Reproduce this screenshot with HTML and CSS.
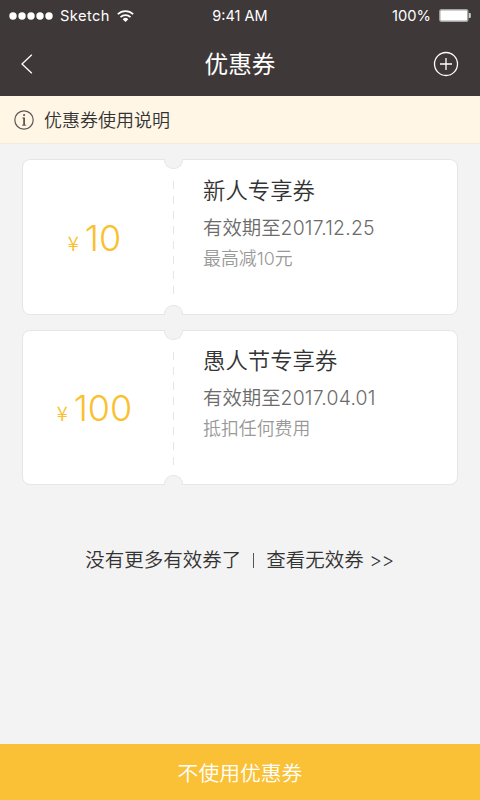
FILE: index.html
```
<!DOCTYPE html>
<html lang="zh-CN">
<head>
<meta charset="UTF-8">
<meta name="viewport" content="width=device-width, initial-scale=1.0">
<title>优惠券</title>
<link rel="stylesheet" href="styles.css">
</head>
<body>
<header class="header">
    <div class="status-bar">
        <div class="status-left">
            <svg class="signal" width="44" height="8" viewBox="0 0 44 8" fill="#fff">
                <circle cx="4" cy="4" r="3.7"/>
                <circle cx="13" cy="4" r="3.7"/>
                <circle cx="22" cy="4" r="3.7"/>
                <circle cx="31" cy="4" r="3.7"/>
                <circle cx="40" cy="4" r="3.7"/>
            </svg>
            <span class="carrier">Sketch</span>
            <svg class="wifi" width="17" height="12" viewBox="0 0 17 12" fill="none" stroke="#fff" stroke-width="1.7">
                <path d="M0.8 4.2a11 11 0 0 1 15.4 0"/>
                <path d="M3.5 7.1a7.2 7.2 0 0 1 10 0"/>
                <path d="M8.5 12l-2.8-2.8a4 4 0 0 1 5.6 0z" fill="#fff" stroke="none"/>
            </svg>
        </div>
        <span class="time">9:41 AM</span>
        <div class="status-right">
            <span class="percent">100%</span>
            <svg class="battery" width="32" height="13" viewBox="0 0 32 13">
                <rect x="0.8" y="0.8" width="28" height="11.4" rx="1.5" fill="#fff" stroke="#a5a2a3" stroke-width="1.4"/>
                <path d="M29.8 4h1a1 1 0 0 1 1 1v3a1 1 0 0 1-1 1h-1z" fill="#d0cecf"/>
            </svg>
        </div>
    </div>
    <div class="nav">
        <svg width="12" height="20" viewBox="0 0 12 20" fill="none" stroke="#fff" stroke-width="1.3">
            <path d="M10.8 0.7L1 10l9.8 9.3"/>
        </svg>
        <h1>优惠券</h1>
        <svg width="26" height="26" viewBox="0 0 26 26" fill="none" stroke="#fff" stroke-width="1.3">
            <circle cx="13" cy="13" r="11.5"/>
            <path d="M7 13h12M13 7v12"/>
        </svg>
    </div>
</header>

<div class="notice">
    <svg width="20" height="20" viewBox="0 0 20 20" fill="none" stroke="#5c5854" stroke-width="1.2">
        <circle cx="10" cy="10" r="9.2"/>
        <path d="M8.3 8h1.7M8 15.2h4.2" stroke-width="0.9"/>
        <path d="M10.1 7.6v7.6" stroke-width="1.8"/>
        <circle cx="10.1" cy="5" r="1.1" fill="#5c5854" stroke="none"/>
    </svg>
    <span>优惠券使用说明</span>
</div>

<main class="coupons">
    <section class="coupon">
        <div class="amount"><span class="yen">¥</span><span class="num">10</span></div>
        <svg class="dashes" width="1" height="113" viewBox="0 0 1 113"><path d="M0.5 0v113" stroke="#e5e5e5" stroke-dasharray="8 7"/></svg>
        <div class="info">
            <h2>新人专享券</h2>
            <p class="date">有效期至<span>2017.12.25</span></p>
            <p class="desc">最高减10元</p>
        </div>
    </section>
    <section class="coupon">
        <div class="amount"><span class="yen">¥</span><span class="num">100</span></div>
        <svg class="dashes" width="1" height="113" viewBox="0 0 1 113"><path d="M0.5 0v113" stroke="#e5e5e5" stroke-dasharray="8 7"/></svg>
        <div class="info">
            <h2>愚人节专享券</h2>
            <p class="date">有效期至<span>2017.04.01</span></p>
            <p class="desc">抵扣任何费用</p>
        </div>
    </section>
</main>

<div class="more">
    <span>没有更多有效券了</span>
    <i class="divider"></i>
    <a>查看无效券 <span class="arrows">&gt;&gt;</span></a>
</div>

<button class="skip">不使用优惠券</button>
</body>
</html>
```

FILE: styles.css
```
* {
    box-sizing: border-box;
    margin: 0;
    padding: 0;
}
body {
    display: flex;
    flex-direction: column;
    height: 800px;
    background-color: #f3f3f3;
    color: #333;
    font-family: Inter, "Noto Sans CJK SC", sans-serif;
    font-weight: 350;
}
svg {
    display: block;
    flex: none;
}
.header {
    height: 96px;
    background-color: #3e3839;
    color: #fff;
}

/* status bar */
.status-bar {
    display: grid;
    grid-template-columns: 1fr auto 1fr;
    align-items: center;
    height: 31px;
    padding: 0 9px;
    font-size: 15px;
    font-weight: 400;
}
.status-left, .status-right {
    display: flex;
    align-items: center;
}
.status-right {
    justify-content: flex-end;
}
.carrier {
    margin: 0 7px 0 7px;
    font-size: 14.7px;
    letter-spacing: 0.4px;
}
.time {
    font-size: 14.5px;
}
.percent {
    margin-right: 8px;
    font-size: 14.7px;
}

/* title bar */
.nav {
    display: flex;
    align-items: center;
    justify-content: space-between;
    height: 65px;
    padding: 0 21px;
}
.nav h1 {
    margin: 2px 0 0 14px;
    font-size: 23.7px;
    font-weight: 400;
    line-height: 36px;
}
.notice {
    display: flex;
    align-items: center;
    gap: 10px;
    height: 48px;
    padding: 0 14px;
    border-bottom: 1px solid #f1ece0;
    background-color: #fff6e5;
    font-size: 18px;
}
.notice span {
    margin-top: -1px;
}

/* coupon cards */
.coupons {
    display: flex;
    flex-direction: column;
    gap: 15px;
    padding: 15px 22px 0;
}
.coupon {
    position: relative;
    display: flex;
    height: 156px;
    border: 1px solid #e6e6e6;
    border-radius: 8px;
    background-color: #fff;
}
.coupon + .coupon {
    height: 155px;
}
/* round notches cut into the top and bottom edge */
.coupon::before, .coupon::after {
    content: "";
    position: absolute;
    left: 141px;
    width: 17px;
    height: 9px;
    border: 1px solid #e6e6e6;
    background-color: #f3f3f3;
}
.coupon::before {
    top: -1px;
    border-top: none;
    border-radius: 0 0 9px 9px;
}
.coupon::after {
    bottom: -1px;
    border-bottom: none;
    border-radius: 9px 9px 0 0;
}
.amount {
    display: flex;
    align-items: baseline;
    justify-content: center;
    width: 150px;
    padding: 56px 7px 0 0;
    color: #fbc02d;
    line-height: 44px;
}
.yen {
    margin-right: 6px;
    font-family: "Noto Sans CJK SC", sans-serif;
    font-size: 20px;
}
.num {
    font-size: 36px;
    font-weight: 330;
}
.coupon + .coupon .amount {
    padding-top: 55px;
}
.dashes {
    margin-top: 21px;
}
.info {
    padding: 14px 0 0 29px;
}
.info h2 {
    font-size: 22.4px;
    font-weight: 350;
    line-height: 34px;
}
.date {
    margin-top: 5px;
    color: #6c6c6c;
    font-size: 19.4px;
    line-height: 30px;
}
.date span {
    letter-spacing: 0.2px;
}
.desc {
    margin-top: 2px;
    color: #999;
    font-size: 17.9px;
    line-height: 28px;
}
.coupon + .coupon .info {
    padding-top: 13px;
}

/* footer */
.more {
    display: flex;
    align-items: center;
    justify-content: center;
    margin-top: 60px;
    padding-right: 1px;
    font-size: 19.5px;
    line-height: 30px;
}
.arrows {
    letter-spacing: -0.5px;
}
.divider {
    width: 1px;
    height: 15px;
    margin: 0 12px;
    background-color: #555;
}
.skip {
    height: 56px;
    margin-top: auto;
    border: none;
    background-color: #fac136;
    color: #fff;
    font-family: inherit;
    font-size: 20.8px;
    font-weight: 350;
}
```
